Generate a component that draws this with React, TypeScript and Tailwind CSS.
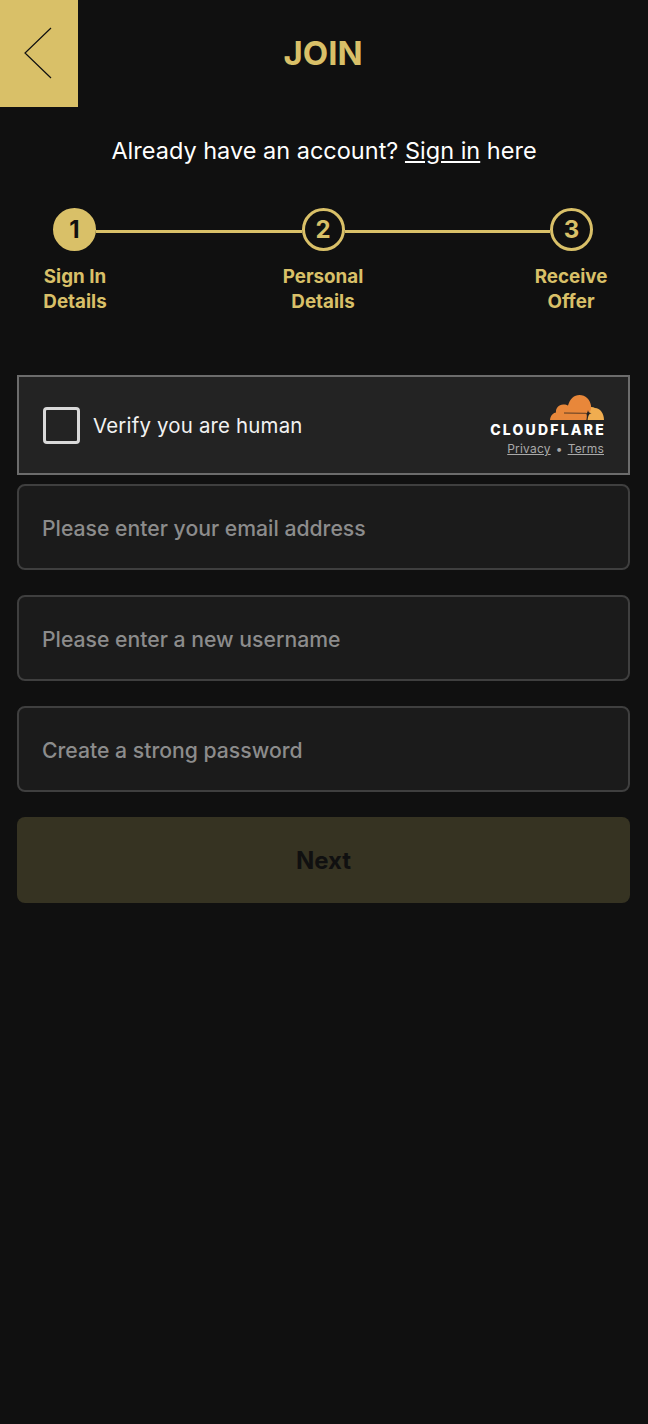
const steps = [
    { num: '1', label: ['Sign In', 'Details'] },
    { num: '2', label: ['Personal', 'Details'] },
    { num: '3', label: ['Receive', 'Offer'] },
];

const fields = ['Please enter your email address', 'Please enter a new username', 'Create a strong password'];

function CloudflareMark() {
    return (
        <svg width="54" height="25" viewBox="0 0 54 25">
            {/* small cloud */}
            <path d="M38 13 C40 11.5 43 11.5 45 13 C50 13 54 18 54 25 L35 25 Z" fill="#f0ad50" />
            {/* main cloud */}
            <path
                d="M0 25 C0.5 20.5 3 18 6 17.5 C5.5 13 9 9 14 9.5 C15.5 9.5 17 10 18 10.5 C20 4 24 0 29.5 0 C35.5 0 40 4.5 41 10.5 C41.5 13.5 40.5 16 39 18 L37 25 Z"
                fill="#e8873a"
            />
            {/* cut line and spark */}
            <path d="M14 18 L36 18.3" stroke="#4a3220" strokeWidth="0.9" />
            <path d="M38 15 C38.3 17 39 17.8 41.5 18.2 C39.2 18.6 38.3 20 37.6 25 L36.4 25 C37 21.5 37.2 19.5 36 18.4 C37.2 18 37.7 17 38 15 Z" fill="#232323" />
        </svg>
    );
}

export default function App() {
    return (
        <div className="min-h-[1424px] bg-[#101010] font-['Inter',sans-serif]">
            {/* Header */}
            <div className="flex h-[107px]">
                <button className="flex h-[107px] w-[78px] shrink-0 items-center bg-[#d9c068] pb-[2px] pl-[8px]">
                    <svg width="44" height="52" viewBox="0 0 44 52" fill="none" stroke="#101010" strokeWidth="1.2">
                        <path d="M43 1 L17 26 L43 51" />
                    </svg>
                </button>
                <h1 className="mr-[80px] flex-1 text-center text-[33px] leading-[106px] font-bold text-[#d9c068]">JOIN</h1>
            </div>

            <p className="mt-[27px] text-center text-[23.5px] leading-[34px] text-white">
                Already have an account? <a className="underline">Sign in</a> here
            </p>

            {/* Stepper */}
            <div className="mt-[40px] flex items-center pr-[55px] pl-[53px]">
                <div className="flex h-[43px] w-[43px] items-center justify-center rounded-full border-[3px] border-[#d9c068] bg-[#d9c068] pt-[1px] text-[24px] font-bold text-[#101010]">1</div>
                <div className="mt-[3px] h-[3px] flex-1 bg-[#d9c068]" />
                <div className="flex h-[43px] w-[43px] items-center justify-center rounded-full border-[3px] border-[#d9c068] pt-[1px] text-[24px] font-bold text-[#d9c068]">2</div>
                <div className="mt-[3px] h-[3px] flex-1 bg-[#d9c068]" />
                <div className="flex h-[43px] w-[43px] items-center justify-center rounded-full border-[3px] border-[#d9c068] pt-[1px] text-[24px] font-bold text-[#d9c068]">3</div>
            </div>
            <div className="mt-[13px] flex justify-between pr-[27px] pl-[25px]">
                {steps.map((step) => (
                    <div key={step.num} className="w-[100px] text-center text-[18.8px] leading-[25px] font-bold text-[#d9c068]">
                        {step.label.map((line) => (
                            <div key={line}>{line}</div>
                        ))}
                    </div>
                ))}
            </div>

            <div className="mt-[61px] pr-[18px] pl-[17px]">
                {/* Turnstile widget */}
                <div className="flex h-[100px] items-center justify-between border-2 border-[#6c6c6c] bg-[#232323] px-[24px]">
                    <div className="flex items-center gap-[13px]">
                        <div className="h-[37px] w-[37px] rounded-[4px] border-[3px] border-[#d9d9d9]" />
                        <span className="pt-[3px] text-[20.4px] tracking-[0.2px] text-[#f2f2f2]">Verify you are human</span>
                    </div>
                    <div className="flex flex-col items-end pt-[1px]">
                        <CloudflareMark />
                        <div className="mt-[2px] mr-[-2px] text-[14px] leading-[15px] font-extrabold tracking-[2.2px] text-white">CLOUDFLARE</div>
                        <div className="mt-[5px] flex items-center gap-[5px] text-[12px] leading-[14px] tracking-[0.2px] text-[#a9a9a9]">
                            <a className="underline">Privacy</a>
                            <span>•</span>
                            <a className="underline">Terms</a>
                        </div>
                    </div>
                </div>

                {/* Fields */}
                <div className="mt-[9px] flex flex-col gap-[25px]">
                    {fields.map((field) => (
                        <input
                            key={field}
                            placeholder={field}
                            className="h-[86px] w-full rounded-lg border-2 border-[#3f3f3f] bg-[#1b1b1b] px-[23px] pt-[2px] text-[21.2px] font-medium outline-none placeholder:text-[#8c8c8c]"
                        />
                    ))}
                    <button className="h-[86px] w-full rounded-lg bg-[#363322] pt-[2px] text-[24px] font-bold text-[#101010]">Next</button>
                </div>
            </div>
        </div>
    );
}
